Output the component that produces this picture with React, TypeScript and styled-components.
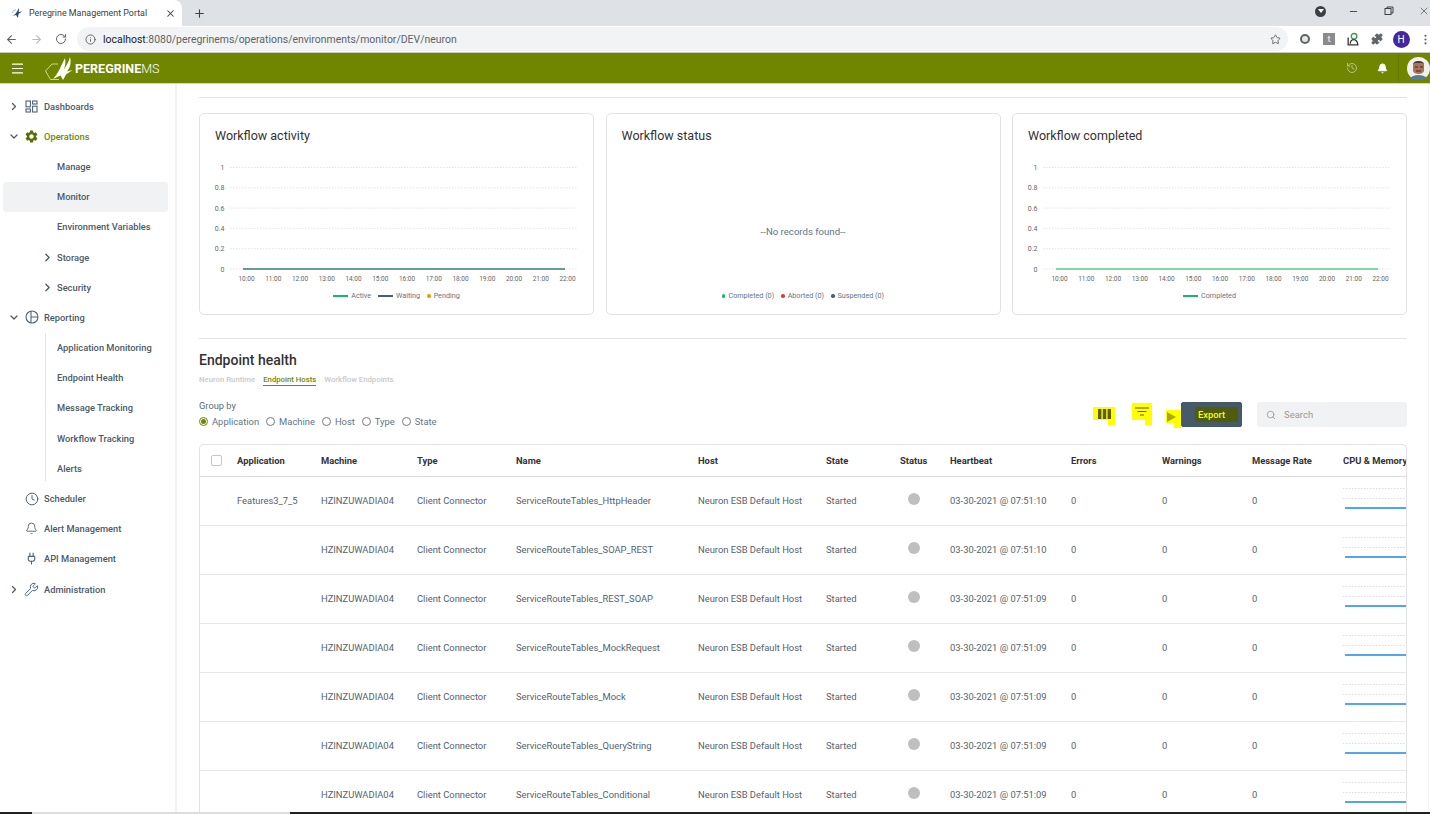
import React from "react";
import styled, { createGlobalStyle } from "styled-components";
import {
  ArrowLeft,
  ArrowRight,
  RotateCw,
  Info,
  Star,
  X,
  Plus,
  Minus,
  Puzzle,
  Menu,
  History,
  Bell,
  ChevronRight,
  ChevronDown,
  Clock,
  Plug,
  Wrench,
  Search,
  MoreVertical,
} from "lucide-react";
import { MdSettings } from "react-icons/md";

const GlobalStyle = createGlobalStyle`
  html, body {
    margin: 0;
    padding: 0;
    height: 100%;
    overflow: hidden;
    background: #fff;
    font-family: Roboto, "Liberation Sans", sans-serif;
  }
  * { box-sizing: border-box; }
`;

const Page = styled.div`
  width: 1430px;
  height: 814px;
  display: flex;
  flex-direction: column;
  overflow: hidden;
  position: relative;
`;

const TabStrip = styled.div`
  height: 26px;
  flex: none;
  background: #dee1e6;
  display: flex;
  align-items: flex-end;
`;

const BrowserTab = styled.div`
  width: 182px;
  height: 26px;
  background: #fff;
  border-radius: 0 8px 0 0;
  display: flex;
  align-items: center;
  padding: 0 6px 0 11px;
  font-size: 8.9px;
  color: #3c4043;
  gap: 6px;
`;

const TabTitle = styled.span`
  flex: 1;
  white-space: nowrap;
`;

const NewTab = styled.div`
  width: 34px;
  height: 26px;
  display: flex;
  align-items: center;
  justify-content: center;
  color: #3c4043;
`;

const WindowControls = styled.div`
  margin-left: auto;
  margin-right: -11px;
  height: 26px;
  padding-bottom: 4px;
  display: flex;
  align-items: center;
  color: #3c4043;
`;

const ProfileDrop = styled.div`
  width: 11px;
  height: 11px;
  border-radius: 50%;
  background: #3c4043;
  margin-right: 10px;
  display: flex;
  align-items: center;
  justify-content: center;
  &::after {
    content: "";
    border-left: 3px solid transparent;
    border-right: 3px solid transparent;
    border-top: 4px solid #fff;
  }
`;

const WindowButton = styled.div`
  width: 35px;
  display: flex;
  justify-content: center;
`;

const AddressRow = styled.div`
  height: 27px;
  flex: none;
  background: #fff;
  display: flex;
  align-items: center;
  padding-left: 5px;
  color: #5f6368;
  border-bottom: 1px solid #c8c8c8;
  overflow: hidden;
`;

const NavIcons = styled.div`
  width: 72px;
  flex: none;
  display: flex;
  align-items: center;
  gap: 12px;
`;

const UrlBar = styled.div`
  width: 1211px;
  height: 24px;
  flex: none;
  border-radius: 12px;
  background: #f1f3f4;
  display: flex;
  align-items: center;
  padding: 0 7px 0 8px;
  gap: 7px;
  font-size: 10.46px;
  color: #5f6368;
`;

const UrlText = styled.span`
  flex: 1;
  b {
    font-weight: 400;
    color: #202124;
  }
`;

const Extensions = styled.div`
  display: flex;
  flex: none;
  align-items: center;
  margin-left: 5px;
`;

const ExtSlot = styled.div`
  width: 24px;
  display: flex;
  justify-content: center;
`;

const ExtGlobe = styled.div`
  width: 10px;
  height: 10px;
  border-radius: 50%;
  border: 2px solid #5f6368;
  background: #e8e8e8;
`;

const ExtSquare = styled.div`
  width: 12px;
  height: 12px;
  background: #8a8a8a;
  color: #ddd;
  font-size: 9px;
  font-weight: 700;
  text-align: center;
  line-height: 12px;
`;

const Avatar = styled.div`
  width: 17px;
  height: 17px;
  border-radius: 50%;
  background: #4527a0;
  color: #fff;
  font-size: 10px;
  line-height: 17px;
  text-align: center;
`;

const TopBar = styled.header`
  height: 31px;
  flex: none;
  background: #718600;
  display: flex;
  align-items: center;
  padding: 0 0 0 10px;
  color: #fff;
  border-bottom: 1px solid #d4d8c8;
`;

const Brand = styled.div`
  display: flex;
  align-items: center;
  margin-left: 20px;
  font-size: 12.5px;
  font-weight: 700;
  span {
    font-weight: 300;
  }
`;

const TopActions = styled.div`
  margin-left: auto;
  display: flex;
  align-items: center;
  height: 100%;
`;

const TopAction = styled.div<{ $dim?: boolean }>`
  width: 31px;
  display: flex;
  justify-content: center;
  color: ${(p) => (p.$dim ? "#b9c47a" : "#fff")};
`;

const UserSlot = styled.div`
  width: 32px;
  height: 100%;
  border-left: 1px solid #66790a;
  display: flex;
  align-items: center;
  padding-left: 8px;
`;

const Body = styled.div`
  flex: 1;
  min-height: 0;
  display: flex;
`;

const Sidebar = styled.nav`
  width: 177px;
  flex: none;
  border-right: 2px solid #f3f3f3;
  padding-top: 7px;
  font-size: 9.3px;
  color: #4d5a66;
`;

const NavRow = styled.div<{ $active?: boolean; $green?: boolean; $sub?: boolean }>`
  height: 30.2px;
  display: flex;
  align-items: center;
  margin: 0 7px 0 3px;
  border-radius: 3px;
  position: relative;
  font-weight: 500;
  white-space: nowrap;
  background: ${(p) => (p.$active ? "#f1f2f4" : "transparent")};
  color: ${(p) => (p.$green ? "#718600" : "#4d5a66")};
  padding-left: ${(p) => (p.$sub ? "54px" : "0")};
`;

const Caret = styled.span`
  width: 12px;
  margin-left: 5px;
  display: flex;
  justify-content: center;
  color: #4d5a66;
`;

const NavIcon = styled.span`
  width: 15px;
  margin-left: 4px;
  margin-right: 5px;
  display: flex;
  justify-content: center;
  color: #4d6478;
`;

const SubCaret = styled.span`
  position: absolute;
  left: 38px;
  display: flex;
  color: #4d5a66;
`;

const ReportGroup = styled.div`
  position: relative;
  &::before {
    content: "";
    position: absolute;
    left: 45px;
    top: 0;
    bottom: 2px;
    width: 1px;
    background: #e4e4e4;
  }
`;

const Main = styled.main`
  flex: 1;
  min-width: 0;
  margin-right: 1px;
  padding: 13px 21px 0 22px;
  border-right: 1px solid #f5f5f5;
  overflow: hidden;
`;

const Rule = styled.div`
  height: 1px;
  background: #e4e4e4;
`;

const Cards = styled.div`
  display: grid;
  grid-template-columns: repeat(3, 395px);
  justify-content: space-between;
  margin-top: 15px;
  margin-bottom: 23px;
`;

const Card = styled.section`
  height: 202px;
  border: 1px solid #e2e2e2;
  border-radius: 5px;
  padding: 14px 15px 0;
  display: flex;
  flex-direction: column;
`;

const CardTitle = styled.h3`
  margin: 0;
  font-size: 12.5px;
  line-height: 15px;
  font-weight: 400;
  color: #333;
`;

const ChartWrap = styled.div`
  height: 126px;
  margin: 18px -15px 0;
`;

const Legend = styled.div`
  display: flex;
  justify-content: center;
  align-items: center;
  gap: 7px;
  font-size: 7.2px;
  line-height: 10px;
  color: #5f7486;
  margin-top: 4px;
`;

const LegendItem = styled.span`
  display: flex;
  align-items: center;
  gap: 3px;
`;

const LegendLine = styled.i<{ $color: string }>`
  width: 15px;
  height: 1.5px;
  background: ${(p) => p.$color};
`;

const LegendDot = styled.i<{ $color: string }>`
  width: 3.5px;
  height: 3.5px;
  border-radius: 50%;
  background: ${(p) => p.$color};
`;

const Empty = styled.div`
  flex: 1;
  display: flex;
  align-items: center;
  justify-content: center;
  font-size: 9.6px;
  color: #5f7486;
  padding-top: 29px;
`;

const StatusLegend = styled(Legend)`
  margin: 0 0 13px;
`;

const SectionTitle = styled.h2`
  margin: 13px 0 0;
  font-size: 14px;
  line-height: 17px;
  font-weight: 500;
  color: #333;
`;

const SubTabs = styled.div`
  display: flex;
  gap: 8px;
  margin-top: 6px;
  font-size: 7.75px;
  font-weight: 500;
`;

const SubTab = styled.span<{ $active?: boolean }>`
  padding-bottom: 1px;
  border-bottom: 1px solid ${(p) => (p.$active ? "#718600" : "transparent")};
  color: ${(p) => (p.$active ? "#718600" : "#c9c9c9")};
`;

const Toolbar = styled.div`
  display: flex;
  align-items: flex-end;
  justify-content: space-between;
  margin-top: 5px;
  height: 36px;
`;

const GroupBlock = styled.div`
  font-size: 9.3px;
  color: #5c6b78;
`;

const Radios = styled.div`
  display: flex;
  gap: 7px;
  margin-top: 5px;
  font-size: 9.4px;
  color: #5f7486;
`;

const Radio = styled.label`
  display: flex;
  align-items: center;
  gap: 4px;
`;

const RadioMark = styled.i<{ $on?: boolean }>`
  width: 9px;
  height: 9px;
  border-radius: 50%;
  border: 1px solid ${(p) => (p.$on ? "#718600" : "#777")};
  display: flex;
  align-items: center;
  justify-content: center;
  &::after {
    content: "";
    width: 5px;
    height: 5px;
    border-radius: 50%;
    background: ${(p) => (p.$on ? "#718600" : "transparent")};
  }
`;

const Tools = styled.div`
  display: flex;
  align-items: flex-start;
  height: 26px;
`;

// hand-drawn yellow marker over the toolbar icons
const Marked = styled.div<{ $w: number; $h: number; $top: number; $gap: number }>`
  width: ${(p) => p.$w}px;
  height: ${(p) => p.$h}px;
  margin-top: ${(p) => p.$top}px;
  margin-right: ${(p) => p.$gap}px;
  background: #ffff00;
  display: flex;
  align-items: center;
  justify-content: center;
  position: relative;
`;

const MarkTail = styled.i`
  position: absolute;
  right: 0;
  bottom: -5px;
  width: 7px;
  height: 6px;
  background: #ffff00;
`;

const Play = styled.i`
  border-top: 5px solid transparent;
  border-bottom: 5px solid transparent;
  border-left: 9px solid #a8a818;
  margin-right: 5px;
`;

const ExportButton = styled.button`
  width: 61px;
  height: 25px;
  margin-top: 1px;
  border: 1px solid #43596a;
  border-radius: 2px;
  background: #465a6a;
  padding: 0 0 0 13px;
  display: flex;
  align-items: center;
  font: 500 9.3px Roboto, sans-serif;
`;

const ExportLabel = styled.span`
  color: #ffff00;
  background: #4e5c0c;
  padding: 2px 13px 2px 3px;
`;

const SearchBox = styled.div`
  width: 150px;
  height: 25px;
  margin-top: 1px;
  margin-left: 15px;
  background: #f1f2f4;
  border-radius: 3px;
  display: flex;
  align-items: center;
  padding-left: 9px;
  gap: 8px;
  font-size: 9.5px;
  color: #9a9a9a;
`;

const Table = styled.div`
  margin-top: 17px;
  width: 1208px;
  border: 1px solid #e2e2e2;
  border-bottom: none;
  border-radius: 5px 5px 0 0;
  overflow: hidden;
`;

const GRID = "37px 84px 96px 99px 182px 128px 74px 50px 121px 91px 90px 91px 64px";

const HeaderRow = styled.div`
  display: grid;
  grid-template-columns: ${GRID};
  height: 32px;
  align-items: center;
  font-size: 9.4px;
  font-weight: 700;
  color: #333;
  border-bottom: 1px solid #dcdcdc;
  white-space: nowrap;
`;

const Row = styled.div`
  display: grid;
  grid-template-columns: ${GRID};
  height: 49px;
  padding-bottom: 2px;
  align-items: center;
  font-size: 9.4px;
  color: #55626e;
  border-bottom: 1px solid #e8e8e8;
  white-space: nowrap;
`;

const CheckBox = styled.i`
  width: 11px;
  height: 11px;
  margin-left: 11px;
  border: 1px solid #c6c6c6;
  border-radius: 2px;
`;

const StatusDot = styled.i`
  width: 12px;
  height: 12px;
  border-radius: 50%;
  margin-left: 8px;
  margin-top: -2px;
  background: #bfbfbf;
`;

const Sparkline = styled.svg`
  width: 64px;
  height: 30px;
  display: block;
`;

const Taskbar = styled.div`
  position: absolute;
  left: 0;
  right: 0;
  bottom: 0;
  height: 2px;
  background: #222;
`;

const TaskbarGap = styled.i`
  position: absolute;
  left: 32px;
  width: 258px;
  height: 2px;
  background: #ddd;
`;

const hours = ["10:00", "11:00", "12:00", "13:00", "14:00", "15:00", "16:00", "17:00", "18:00", "19:00", "20:00", "21:00", "22:00"];
const ticks = ["1", "0.8", "0.6", "0.4", "0.2", "0"];

// the two line charts share axes, only the series colours differ
const LineChart = ({ lines }: { lines: string[] }) => (
  <svg width="393" height="126" viewBox="0 0 393 126">
    {ticks.map((t, i) => (
      <g key={t}>
        <line x1="30" x2="378" y1={i * 20.3 + 6.5} y2={i * 20.3 + 6.5} stroke="#d8d8d8" strokeWidth="0.7" strokeDasharray="1.5 1.5" />
        <text x="24.5" y={i * 20.3 + 9} fontSize="7" fill="#666" textAnchor="end" fontFamily="Roboto, sans-serif">
          {t}
        </text>
      </g>
    ))}
    {lines.map((c) => (
      <line key={c} x1="43" x2="365" y1="108" y2="108" stroke={c} strokeWidth="1.5" />
    ))}
    {hours.map((h, i) => (
      <text key={h} x={46.5 + i * 26.75} y="120" fontSize="6.5" fill="#666" textAnchor="middle" fontFamily="Roboto, sans-serif">
        {h}
      </text>
    ))}
  </svg>
);

const Spark = () => (
  <Sparkline viewBox="0 0 64 30">
    <line x1="0" x2="64" y1="3.5" y2="3.5" stroke="#ddd" strokeWidth="1" strokeDasharray="1.5 1.5" />
    <line x1="0" x2="64" y1="13.5" y2="13.5" stroke="#ddd" strokeWidth="1" strokeDasharray="1.5 1.5" />
    <line x1="2" x2="64" y1="23" y2="23" stroke="#55a5ee" strokeWidth="1.8" />
  </Sparkline>
);

const Logo = () => (
  <svg width="30" height="26" viewBox="0 0 30 26" fill="none">
    <path d="M7 9 L0.5 16 L5.5 24.5 H14" stroke="#e4e8c4" strokeWidth="0.8" />
    <path d="M7 9 H13" stroke="#e4e8c4" strokeWidth="0.8" />
    <path d="M8 24 C13 19 16 11 20 3 C21 8 20 12 18.5 15 C21.5 11 24 6 25 2 C26.5 8 25 13 22 16.5 L27.5 15 L21 19.5 L18 25 L15.5 20.5 Z" fill="#fff" />
  </svg>
);

const Favicon = () => (
  <svg width="12" height="12" viewBox="0 0 12 12">
    <path d="M1 9 C4 8 6 5 8 1 C8 3 8 4 7.5 5 L11 4.5 L7.5 7 L7 11 L5 8 Z" fill="#274a78" />
    <path d="M1 6 L3 3 L5 3" fill="none" stroke="#8aa2c0" strokeWidth="0.8" />
  </svg>
);

const ReportIcon = () => (
  <svg width="14" height="14" viewBox="0 0 14 14" fill="none" stroke="#4d6478" strokeWidth="1.1">
    <circle cx="7" cy="7" r="6" />
    <path d="M6 1v12M6 7h7" />
  </svg>
);

const DashIcon = () => (
  <svg width="13" height="13" viewBox="0 0 13 13" fill="none" stroke="#4d6478" strokeWidth="1.1">
    <rect x="1" y="1" width="4.4" height="5.8" />
    <rect x="7.6" y="1" width="4.4" height="3" />
    <rect x="1" y="9" width="4.4" height="3" />
    <rect x="7.6" y="6.2" width="4.4" height="5.8" />
  </svg>
);

const ColumnsIcon = () => (
  <svg width="13" height="10" viewBox="0 0 13 10" fill="#5d5d10">
    <rect x="0" y="0" width="3.4" height="10" />
    <rect x="4.8" y="0" width="3.4" height="10" />
    <rect x="9.6" y="0" width="3.4" height="10" />
  </svg>
);

const FilterIcon = () => (
  <svg width="14" height="9" viewBox="0 0 14 9" fill="none" stroke="#5d5d10" strokeWidth="1.2">
    <path d="M0 1h14M2.5 4.5h9M5 8h4" />
  </svg>
);

const UserPhoto = () => (
  <svg width="23" height="23" viewBox="0 0 23 23">
    <circle cx="11.5" cy="11.5" r="11.5" fill="#f2f0ec" />
    <path d="M6 7 C7 3 16 3 17 7 L17 14 C16 18 7 18 6 14 Z" fill="#a8735a" />
    <path d="M6 7 C7 3 16 3 17 7 L15 6 H8 Z" fill="#4a3a34" />
    <path d="M8 10h3M13 10h3" stroke="#3a2a24" strokeWidth="1" />
    <path d="M9 14h5" stroke="#4a2a20" strokeWidth="1" />
    <path d="M3 21 C7 17 16 17 20 21 A11.5 11.5 0 0 1 3 21 Z" fill="#5a7a9a" />
  </svg>
);

type Nav = { label: string; icon?: React.ReactNode; open?: boolean; closed?: boolean; green?: boolean };

const rows = [
  ["Features3_7_5", "ServiceRouteTables_HttpHeader", "03-30-2021 @ 07:51:10"],
  ["", "ServiceRouteTables_SOAP_REST", "03-30-2021 @ 07:51:10"],
  ["", "ServiceRouteTables_REST_SOAP", "03-30-2021 @ 07:51:09"],
  ["", "ServiceRouteTables_MockRequest", "03-30-2021 @ 07:51:09"],
  ["", "ServiceRouteTables_Mock", "03-30-2021 @ 07:51:09"],
  ["", "ServiceRouteTables_QueryString", "03-30-2021 @ 07:51:09"],
  ["", "ServiceRouteTables_Conditional", "03-30-2021 @ 07:51:09"],
];

const columns = ["Application", "Machine", "Type", "Name", "Host", "State", "Status", "Heartbeat", "Errors", "Warnings", "Message Rate", "CPU & Memory"];

const TopNav = ({ label, icon, open, closed, green }: Nav) => (
  <NavRow $green={green}>
    <Caret>
      {open && <ChevronDown size={13} strokeWidth={2.5} />}
      {closed && <ChevronRight size={13} strokeWidth={2.5} />}
    </Caret>
    <NavIcon>{icon}</NavIcon>
    {label}
  </NavRow>
);

export default function App() {
  return (
    <Page>
      <GlobalStyle />
      <TabStrip>
        <BrowserTab>
          <Favicon />
          <TabTitle>Peregrine Management Portal</TabTitle>
          <X size={11} strokeWidth={2.2} />
        </BrowserTab>
        <NewTab>
          <Plus size={13} strokeWidth={2} />
        </NewTab>
        <WindowControls>
          <ProfileDrop />
          <WindowButton>
            <Minus size={11} />
          </WindowButton>
          <WindowButton>
            <svg width="10" height="10" viewBox="0 0 10 10" fill="none" stroke="#3c4043">
              <rect x="1" y="2.5" width="6" height="6" />
              <path d="M3 2.5V1h6v6H7" />
            </svg>
          </WindowButton>
          <WindowButton>
            <X size={12} strokeWidth={1.3} />
          </WindowButton>
        </WindowControls>
      </TabStrip>
      <AddressRow>
        <NavIcons>
          <ArrowLeft size={13} strokeWidth={2} />
          <ArrowRight size={13} strokeWidth={2} color="#b8babd" />
          <RotateCw size={12} strokeWidth={2} />
        </NavIcons>
        <UrlBar>
          <Info size={11} />
          <UrlText>
            <b>localhost</b>:8080/peregrinems/operations/environments/monitor/DEV/neuron
          </UrlText>
          <Star size={11} />
        </UrlBar>
        <Extensions>
          <ExtSlot><ExtGlobe /></ExtSlot>
          <ExtSlot><ExtSquare>t</ExtSquare></ExtSlot>
          <ExtSlot>
            <svg width="14" height="14" viewBox="0 0 13 13" fill="none">
              <circle cx="7.5" cy="4" r="2.6" stroke="#3d9a50" strokeWidth="1.2" />
              <path d="M2 5v7h9c0-3-2-5-4-5S4 9 4 11" stroke="#333" strokeWidth="1.2" />
            </svg>
          </ExtSlot>
          <ExtSlot><Puzzle size={12} fill="#5f6368" /></ExtSlot>
          <ExtSlot><Avatar>H</Avatar></ExtSlot>
          <ExtSlot><MoreVertical size={13} /></ExtSlot>
        </Extensions>
      </AddressRow>
      <TopBar>
        <Menu size={15} strokeWidth={1.8} />
        <Brand>
          <Logo />
          <div>
            PEREGRINE<span>MS</span>
          </div>
        </Brand>
        <TopActions>
          <TopAction $dim>
            <History size={12} />
          </TopAction>
          <TopAction>
            <Bell size={11} fill="#fff" />
          </TopAction>
          <UserSlot>
            <UserPhoto />
          </UserSlot>
        </TopActions>
      </TopBar>
      <Body>
        <Sidebar>
          <TopNav label="Dashboards" closed icon={<DashIcon />} />
          <TopNav label="Operations" open green icon={<MdSettings size={15} color="#5d6e00" />} />
          <NavRow $sub>Manage</NavRow>
          <NavRow $sub $active>Monitor</NavRow>
          <NavRow $sub>Environment Variables</NavRow>
          <NavRow $sub>
            <SubCaret><ChevronRight size={13} strokeWidth={2.5} /></SubCaret>
            Storage
          </NavRow>
          <NavRow $sub>
            <SubCaret><ChevronRight size={13} strokeWidth={2.5} /></SubCaret>
            Security
          </NavRow>
          <TopNav label="Reporting" open icon={<ReportIcon />} />
          <ReportGroup>
            <NavRow $sub>Application Monitoring</NavRow>
            <NavRow $sub>Endpoint Health</NavRow>
            <NavRow $sub>Message Tracking</NavRow>
            <NavRow $sub>Workflow Tracking</NavRow>
            <NavRow $sub>Alerts</NavRow>
          </ReportGroup>
          <TopNav label="Scheduler" icon={<Clock size={14} strokeWidth={1.7} />} />
          <TopNav label="Alert Management" icon={<Bell size={13} strokeWidth={1.7} />} />
          <TopNav label="API Management" icon={<Plug size={13} strokeWidth={2} />} />
          <TopNav label="Administration" closed icon={<Wrench size={15} strokeWidth={1.6} />} />
        </Sidebar>
        <Main>
          <Rule />
          <Cards>
            <Card>
              <CardTitle>Workflow activity</CardTitle>
              <ChartWrap>
                <LineChart lines={["#13b86c", "#46607a", "#6fa8a0"]} />
              </ChartWrap>
              <Legend>
                <LegendItem><LegendLine $color="#13b86c" />Active</LegendItem>
                <LegendItem><LegendLine $color="#46607a" />Waiting</LegendItem>
                <LegendItem><LegendDot $color="#f59a00" />Pending</LegendItem>
              </Legend>
            </Card>
            <Card>
              <CardTitle>Workflow status</CardTitle>
              <Empty>--No records found--</Empty>
              <StatusLegend>
                <LegendItem><LegendDot $color="#13b86c" />Completed (0)</LegendItem>
                <LegendItem><LegendDot $color="#e53935" />Aborted (0)</LegendItem>
                <LegendItem><LegendDot $color="#46607a" />Suspended (0)</LegendItem>
              </StatusLegend>
            </Card>
            <Card>
              <CardTitle>Workflow completed</CardTitle>
              <ChartWrap>
                <LineChart lines={["#4fcf8f"]} />
              </ChartWrap>
              <Legend>
                <LegendItem><LegendLine $color="#13b86c" />Completed</LegendItem>
              </Legend>
            </Card>
          </Cards>
          <Rule />
          <SectionTitle>Endpoint health</SectionTitle>
          <SubTabs>
            <SubTab>Neuron Runtime</SubTab>
            <SubTab $active>Endpoint Hosts</SubTab>
            <SubTab>Workflow Endpoints</SubTab>
          </SubTabs>
          <Toolbar>
            <GroupBlock>
              Group by
              <Radios>
                <Radio><RadioMark $on />Application</Radio>
                <Radio><RadioMark />Machine</Radio>
                <Radio><RadioMark />Host</Radio>
                <Radio><RadioMark />Type</Radio>
                <Radio><RadioMark />State</Radio>
              </Radios>
            </GroupBlock>
            <Tools>
              <Marked $w={22} $h={13} $top={6} $gap={17}>
                <ColumnsIcon />
                <MarkTail />
              </Marked>
              <Marked $w={20} $h={17} $top={2} $gap={14}>
                <FilterIcon />
                <MarkTail />
              </Marked>
              <Marked $w={15} $h={13} $top={9} $gap={0}>
                <Play />
                <MarkTail />
              </Marked>
              <ExportButton><ExportLabel>Export</ExportLabel></ExportButton>
              <SearchBox>
                <Search size={10} color="#999" />
                Search
              </SearchBox>
            </Tools>
          </Toolbar>
          <Table>
            <HeaderRow>
              <CheckBox />
              {columns.map((c) => (
                <span key={c}>{c}</span>
              ))}
            </HeaderRow>
            {rows.map(([app, name, beat]) => (
              <Row key={name}>
                <span />
                <span>{app}</span>
                <span>HZINZUWADIA04</span>
                <span>Client Connector</span>
                <span>{name}</span>
                <span>Neuron ESB Default Host</span>
                <span>Started</span>
                <StatusDot />
                <span>{beat}</span>
                <span>0</span>
                <span>0</span>
                <span>0</span>
                <Spark />
              </Row>
            ))}
          </Table>
        </Main>
      </Body>
      <Taskbar>
        <TaskbarGap />
      </Taskbar>
    </Page>
  );
}
